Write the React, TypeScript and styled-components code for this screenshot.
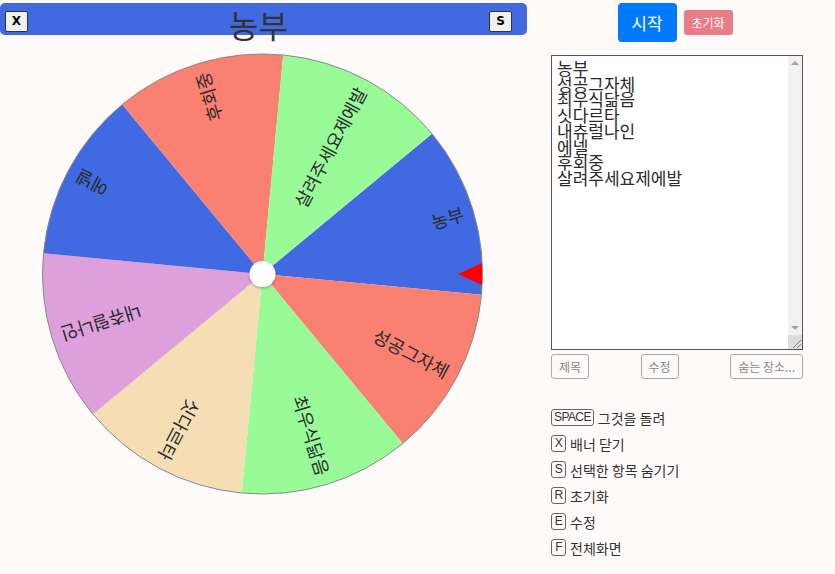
import styled, { createGlobalStyle } from "styled-components"

const GlobalStyle = createGlobalStyle`
  body {
    margin: 0;
    background: #fffafa;
    font-family: "Noto Sans CJK KR", "Noto Sans", sans-serif;
  }
`

const items = [
  "농부",
  "성공그자체",
  "최우식닮음",
  "싯다르타",
  "내츄럴나인",
  "에넬",
  "후회중",
  "살려주세요제에발",
]

const colors = ["#4169e1", "#fa8072", "#98fb98", "#f5deb3", "#dda0dd"]

const shortcuts = [
  { key: "SPACE", label: "그것을 돌려" },
  { key: "X", label: "배너 닫기" },
  { key: "S", label: "선택한 항목 숨기기" },
  { key: "R", label: "초기화" },
  { key: "E", label: "수정" },
  { key: "F", label: "전체화면" },
]

const CX = 262.5
const CY = 230
const R = 220
const OFFSET = -39.6

const point = (deg: number, r: number) => {
  const rad = (deg * Math.PI) / 180
  return [CX + r * Math.cos(rad), CY + r * Math.sin(rad)]
}

const Wheel = () => {
  const step = 360 / items.length
  return (
    <WheelSvg width={527} height={460} viewBox="0 0 527 460">
      <defs>
        <filter id="hub" x="-50%" y="-50%" width="200%" height="200%">
          <feDropShadow dx="0" dy="1" stdDeviation="1.5" floodOpacity="0.35" />
        </filter>
      </defs>
      {items.map((name, i) => {
        const a0 = OFFSET + step * i
        const a1 = a0 + step
        const [x0, y0] = point(a0, R)
        const [x1, y1] = point(a1, R)
        const color = i < 5 ? colors[i] : colors[i - 5]
        return (
          <path
            key={name}
            d={`M${CX},${CY} L${x0},${y0} A${R},${R} 0 0 1 ${x1},${y1} Z`}
            fill={color}
          />
        )
      })}
      <circle cx={CX} cy={CY} r={R} fill="none" stroke="#8a8a8a" strokeWidth={1} />
      {items.map((name, i) => {
        const mid = OFFSET + step * i + step / 2
        return (
          <SliceLabel
            key={name}
            x={CX + 210}
            y={CY}
            textAnchor="end"
            dominantBaseline="central"
            transform={`rotate(${mid} ${CX} ${CY})`}
          >
            {name}
          </SliceLabel>
        )
      })}
      <circle cx={CX} cy={CY} r={13} fill="#fff" filter="url(#hub)" />
      <polygon points="458,230 482,219 482,241" fill="#ff0000" />
    </WheelSvg>
  )
}

const Grip = () => (
  <svg width={14} height={14} viewBox="0 0 14 14">
    <path d="M13 5 L5 13 M13 9 L9 13" stroke="#888" strokeWidth={1} />
  </svg>
)

export default function App() {
  return (
    <>
      <GlobalStyle />
      <Page>
        <LeftColumn>
          <Banner>
            <BannerButton>X</BannerButton>
            <Title>농부</Title>
            <BannerButton>S</BannerButton>
          </Banner>
          <Wheel />
        </LeftColumn>
        <RightColumn>
          <TopButtons>
            <StartButton>시작</StartButton>
            <ResetButton>초기화</ResetButton>
          </TopButtons>
          <ListBox>
            <ItemList defaultValue={items.join("\n")} spellCheck={false} />
            <ScrollRail>
              <Arrow $dir="up" />
              <RailSpacer />
              <Arrow $dir="down" />
              <Corner>
                <Grip />
              </Corner>
            </ScrollRail>
          </ListBox>
          <SmallButtons>
            <OutlineButton>제목</OutlineButton>
            <OutlineButton>수정</OutlineButton>
            <OutlineButton>숨는 장소...</OutlineButton>
          </SmallButtons>
          <Shortcuts>
            {shortcuts.map((s) => (
              <ShortcutRow key={s.key}>
                <Kbd>{s.key}</Kbd>
                <span>{s.label}</span>
              </ShortcutRow>
            ))}
          </Shortcuts>
        </RightColumn>
      </Page>
    </>
  )
}

const Page = styled.div`
  display: flex;
  gap: 24px;
  width: 835px;
  height: 574px;
  overflow: hidden;
`

const LeftColumn = styled.div`
  display: flex;
  flex-direction: column;
  width: 527px;
  padding-top: 3px;
`

const Banner = styled.div`
  display: flex;
  align-items: center;
  justify-content: space-between;
  height: 32px;
  padding: 0 15px 0 5px;
  background: #4169e1;
  border-radius: 5px;
`

const BannerButton = styled.button`
  width: 23px;
  height: 21px;
  padding: 0;
  margin-top: 4px;
  background: #f0f0f0;
  border: 1px solid #333;
  border-radius: 2px;
  font-family: "DejaVu Sans", sans-serif;
  font-weight: bold;
  font-size: 12px;
  color: #000;
`

const Title = styled.h1`
  margin: 0;
  font-size: 32px;
  font-weight: 400;
  line-height: 32px;
  color: #333;
  transform: translateY(5px);
`

const WheelSvg = styled.svg`
  display: block;
  margin-top: 9px;
`

const SliceLabel = styled.text`
  font-family: "Noto Sans CJK KR", sans-serif;
  font-size: 18px;
  fill: #2b2b2b;
`

const RightColumn = styled.div`
  display: flex;
  flex-direction: column;
  width: 252px;
`

const TopButtons = styled.div`
  display: flex;
  align-items: center;
  justify-content: center;
  gap: 7px;
  height: 39px;
  margin-top: 3px;
  padding-right: 4px;
`

const StartButton = styled.button`
  width: 59px;
  height: 39px;
  padding: 0;
  border: none;
  border-radius: 4px;
  background: #007bff;
  color: #fff;
  font-family: "Noto Sans CJK KR", sans-serif;
  font-size: 17px;
`

const ResetButton = styled.button`
  width: 49px;
  height: 25px;
  padding: 0;
  border: none;
  border-radius: 3px;
  background: #e87c87;
  color: #fff;
  font-family: "Noto Sans CJK KR", sans-serif;
  font-size: 12px;
`

const ListBox = styled.div`
  box-sizing: border-box;
  display: flex;
  width: 252px;
  height: 295px;
  margin-top: 13px;
  border: 1px solid #555;
  background: #fff;
`

const ItemList = styled.textarea`
  flex: 1;
  min-width: 0;
  margin: 0;
  padding: 4px 5px;
  border: none;
  background: #fff;
  color: #2a2a2a;
  font-family: "Noto Sans CJK KR", sans-serif;
  font-size: 17px;
  line-height: 15.7px;
  overflow: hidden;
  resize: none;
  outline: none;
`

const ScrollRail = styled.div`
  display: flex;
  flex-direction: column;
  width: 14px;
  background: #f1f1f1;
`

const RailSpacer = styled.div`
  flex: 1;
`

const Arrow = styled.div<{ $dir: "up" | "down" }>`
  height: 14px;
  display: flex;
  align-items: center;
  justify-content: center;

  &::before {
    content: "";
    width: 0;
    height: 0;
    border-left: 4px solid transparent;
    border-right: 4px solid transparent;
    ${(p) =>
      p.$dir === "up"
        ? "border-bottom: 4px solid #a3a3a3;"
        : "border-top: 4px solid #a3a3a3;"}
  }
`

const Corner = styled.div`
  height: 14px;
  background: #dcdcdc;
  line-height: 0;
`

const SmallButtons = styled.div`
  display: flex;
  justify-content: space-between;
  margin-top: 4px;
`

const OutlineButton = styled.button`
  height: 25px;
  padding: 0 7px;
  background: transparent;
  border: 1px solid #aaa;
  border-radius: 3px;
  color: #888;
  font-family: "Noto Sans CJK KR", sans-serif;
  font-size: 12px;
`

const Shortcuts = styled.div`
  display: flex;
  flex-direction: column;
  gap: 9px;
  margin-top: 30px;
`

const ShortcutRow = styled.div`
  display: flex;
  align-items: center;
  gap: 4px;
  height: 17px;
  font-size: 14px;
  color: #333;
`

const Kbd = styled.span`
  box-sizing: border-box;
  height: 17px;
  min-width: 15px;
  padding: 0 2px;
  border: 1px solid #666;
  border-radius: 3px;
  font-family: "Liberation Sans", sans-serif;
  font-size: 12px;
  letter-spacing: -0.6px;
  line-height: 15px;
  text-align: center;
  color: #333;
`
